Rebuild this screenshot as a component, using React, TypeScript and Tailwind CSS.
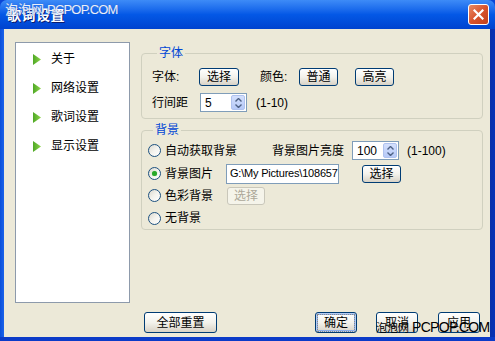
import React from "react";

function Btn({
  children,
  className = "",
  focused = false,
  disabled = false,
}: {
  children: React.ReactNode;
  className?: string;
  focused?: boolean;
  disabled?: boolean;
}) {
  if (disabled) {
    return (
      <div
        className={`flex items-center justify-center rounded-[3px] border border-[#C9C7BA] bg-[#F5F4EA] text-[12px] leading-none text-[#ACA899] ${className}`}
      >
        {children}
      </div>
    );
  }
  return (
    <div
      className={`flex items-center justify-center rounded-[3px] border border-[#003C74] bg-linear-to-b from-white via-[#F3F2EC] to-[#D8D2C6] text-[12px] leading-none text-black ${
        focused ? "shadow-[inset_0_0_0_1px_#B6CCF2,inset_0_0_0_2px_#8AAEEB]" : ""
      } ${className}`}
    >
      {focused ? (
        <span className="border border-dotted border-[#8a8a8a] px-[6px] py-[2px]">{children}</span>
      ) : (
        children
      )}
    </div>
  );
}

function Spin({ value, width }: { value: string; width: string }) {
  return (
    <div
      className={`flex h-[19px] ${width} items-center border border-[#7F9DB9] bg-white pl-[4px] pr-[1px]`}
    >
      <span className="flex-1 text-[12px] leading-none text-black">{value}</span>
      <div className="flex h-[15px] w-[14px] flex-col items-center justify-center gap-[2px] rounded-[2px] border border-[#AFC2EF] bg-linear-to-b from-[#D4E0FC] to-[#B6C9F8]">
        <svg width="7" height="4" viewBox="0 0 7 4">
          <path d="M0.5 3.5 L3.5 0.5 L6.5 3.5" fill="none" stroke="#4D6185" strokeWidth="1.4" />
        </svg>
        <svg width="7" height="4" viewBox="0 0 7 4">
          <path d="M0.5 0.5 L3.5 3.5 L6.5 0.5" fill="none" stroke="#4D6185" strokeWidth="1.4" />
        </svg>
      </div>
    </div>
  );
}

function Radio({ checked = false }: { checked?: boolean }) {
  return (
    <div className="flex h-[13px] w-[13px] shrink-0 items-center justify-center rounded-full border border-[#1C5180] bg-linear-to-br from-[#DCD9CF] via-[#F4F3EE] to-white">
      {checked && <div className="h-[5px] w-[5px] rounded-full bg-[#28A828] shadow-[0_0_1px_#6FD06F]" />}
    </div>
  );
}

function Arrow() {
  return (
    <svg width="8" height="11" viewBox="0 0 8 11">
      <defs>
        <linearGradient id="ga" x1="0" y1="0" x2="1" y2="0">
          <stop offset="0" stopColor="#4FA826" />
          <stop offset="1" stopColor="#8CD44A" />
        </linearGradient>
      </defs>
      <path d="M0 0 L8 5.5 L0 11 Z" fill="url(#ga)" />
    </svg>
  );
}

export default function App() {
  const navItems = ["关于", "网络设置", "歌词设置", "显示设置"];
  return (
    <div className="relative flex h-[341px] w-[495px] flex-col overflow-hidden bg-[#0A46D6] font-['Liberation_Sans','Noto_Sans_CJK_SC',sans-serif]">
      {/* Title bar */}
      <div className="relative flex h-[29px] shrink-0 items-center justify-between rounded-t-[7px] bg-linear-to-b from-[#3D8BF7] via-[#0458E6] to-[#0043CF] pl-[7px] pr-[6px]">
        <span className="pt-[2px] text-[14px] font-bold tracking-[0.5px] text-white [text-shadow:1px_1px_0_#0A1C6E]">
          歌词设置
        </span>
        <div className="flex h-[21px] w-[21px] items-center justify-center rounded-[3px] border border-white bg-linear-to-br from-[#E88A64] via-[#D8532C] to-[#C0401C]">
          <svg width="11" height="11" viewBox="0 0 11 11">
            <path d="M1.5 1.5 L9.5 9.5 M9.5 1.5 L1.5 9.5" stroke="white" strokeWidth="2.2" strokeLinecap="square" />
          </svg>
        </div>
        <div className="pointer-events-none absolute left-[5px] top-[2px] flex items-baseline gap-[3px] text-white/90 [text-shadow:0_0_1px_#3060c0]">
          <span className="text-[13px] leading-[16px]">泡泡网</span>
          <span className="text-[13px] leading-[16px] tracking-[-0.8px]">PCPOP.COM</span>
        </div>
      </div>

      {/* Body row */}
      <div className="flex flex-1">
        <div className="w-[4px] bg-linear-to-r from-[#0A4FDA] to-[#1B63EA]" />
        <div className="flex flex-1 bg-[#ECE9D8] pb-[4px] pl-[11px] pt-[13px]">
          {/* Left nav panel */}
          <div className="flex h-[261px] w-[115px] shrink-0 flex-col gap-[13px] border border-[#8D9AAB] bg-white pl-[17px] pt-[8px]">
            {navItems.map((t) => (
              <div key={t} className="flex h-[16px] items-center">
                <Arrow />
                <span className="ml-[10px] text-[12px] leading-none text-black">{t}</span>
              </div>
            ))}
          </div>

          {/* Right column */}
          <div className="ml-[11px] flex w-[342px] flex-col pt-[3px]">
            {/* 字体 group */}
            <fieldset className="rounded-[4px] border border-[#D0D0BF] pb-[6px] pl-[10px]">
              <legend className="ml-[5px] px-[2px] text-[12px] leading-[16px] text-[#0046D5]">字体</legend>
              <div className="mt-[7px] flex h-[18px] items-center text-[12px] leading-none text-black">
                <span className="w-[47px]">字体:</span>
                <Btn className="h-[18px] w-[40px]">选择</Btn>
                <span className="ml-[21px] w-[39px]">颜色:</span>
                <Btn className="h-[18px] w-[39px]">普通</Btn>
                <Btn className="ml-[17px] h-[18px] w-[39px]">高亮</Btn>
              </div>
              <div className="mt-[7px] flex h-[19px] items-center text-[12px] leading-none text-black">
                <span className="w-[48px]">行间距</span>
                <Spin value="5" width="w-[47px]" />
                <span className="ml-[9px]">(1-10)</span>
              </div>
            </fieldset>

            {/* 背景 group */}
            <fieldset className="mt-[3px] rounded-[4px] border border-[#D0D0BF] pl-[6px]">
              <legend className="ml-[5px] px-[2px] text-[12px] leading-[16px] text-[#0046D5]">背景</legend>
              <div className="mt-[3px] flex h-[19px] items-center text-[12px] leading-none text-black">
                <div className="flex w-[124px] items-center gap-[4px]">
                  <Radio />
                  <span>自动获取背景</span>
                </div>
                <span className="w-[80px]">背景图片亮度</span>
                <Spin value="100" width="w-[47px]" />
                <span className="ml-[8px]">(1-100)</span>
              </div>
              <div className="mt-[3px] flex h-[21px] items-center text-[12px] leading-none text-black">
                <div className="flex w-[78px] items-center gap-[4px]">
                  <Radio checked />
                  <span>背景图片</span>
                </div>
                <div className="flex h-[20px] w-[113px] items-center overflow-hidden whitespace-nowrap border border-[#7F9DB9] bg-white pl-[3px] text-[11px] tracking-[-0.2px]">
                  G:\My Pictures\108657
                </div>
                <Btn className="ml-[23px] h-[18px] w-[39px]">选择</Btn>
              </div>
              <div className="mt-[2px] flex h-[19px] items-center text-[12px] leading-none text-black">
                <div className="flex w-[79px] items-center gap-[4px]">
                  <Radio />
                  <span>色彩背景</span>
                </div>
                <Btn disabled className="h-[18px] w-[38px]">
                  选择
                </Btn>
              </div>
              <div className="mt-[3px] mb-[1px] flex h-[20px] items-center text-[12px] leading-none text-black">
                <div className="flex items-center gap-[4px]">
                  <Radio />
                  <span>无背景</span>
                </div>
              </div>
            </fieldset>

            {/* Bottom buttons */}
            <div className="mt-auto flex items-center justify-between pl-[3px] pr-[3px]">
              <Btn className="h-[21px] w-[73px]">全部重置</Btn>
              <div className="flex items-center gap-[19px]">
                <Btn focused className="h-[21px] w-[42px]">
                  确定
                </Btn>
                <Btn className="h-[21px] w-[42px]">取消</Btn>
                <Btn className="ml-[1px] h-[21px] w-[42px]">应用</Btn>
              </div>
            </div>
          </div>
        </div>
        <div className="w-[5px] bg-linear-to-r from-[#0A2FA8] to-[#0732B8]" />
      </div>
      <div className="h-[4px] shrink-0 bg-[#0B3BC8]" />

      {/* bottom-right watermark */}
      <div className="pointer-events-none absolute left-[376px] top-[319px] flex items-baseline gap-[3px] text-black">
        <span className="text-[11px] leading-[16px]">泡泡网</span>
        <span className="text-[14px] leading-[16px] tracking-[-0.7px]">PCPOP.COM</span>
      </div>
    </div>
  );
}
